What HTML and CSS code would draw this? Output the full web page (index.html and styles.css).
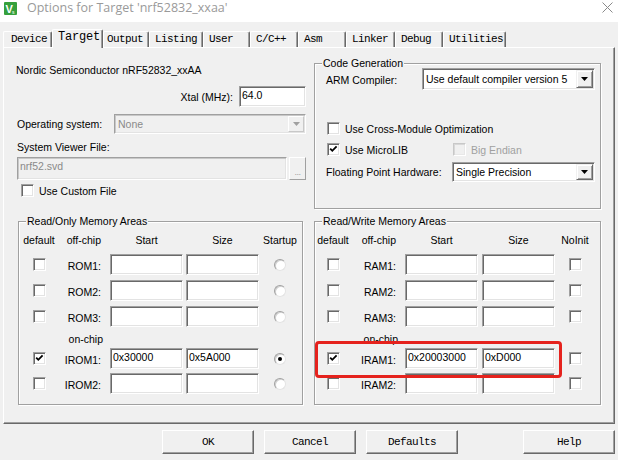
FILE: index.html
```html
<!DOCTYPE html>
<html>
<head>
<meta charset="utf-8">
<title>Options for Target</title>
<link rel="stylesheet" href="styles.css">
</head>
<body>
<div class="titlebar">
  <svg class="app-icon" width="13" height="13" viewBox="0 0 13 13"><rect width="13" height="13" rx="1" fill="#36a03c"/><text x="1.5" y="10.5" font-family="Liberation Sans, sans-serif" font-weight="bold" font-size="11" fill="#fff">V</text><text x="8" y="12" font-family="Liberation Sans, sans-serif" font-size="5" fill="#fff">s</text></svg>
  <span class="title">Options for Target 'nrf52832_xxaa'</span>
  <svg class="close" width="11" height="11" viewBox="0 0 11 11"><path d="M0.5 0.5L10.5 10.5M10.5 0.5L0.5 10.5" stroke="#8a8a8a" stroke-width="1" fill="none"/></svg>
</div>

<div class="tabs">
  <div class="tab w-device">Device</div>
  <div class="tab tab-active w-target">Target</div>
  <div class="tab w-output">Output</div>
  <div class="tab w-listing">Listing</div>
  <div class="tab w-user">User</div>
  <div class="tab w-cpp">C/C++</div>
  <div class="tab w-asm">Asm</div>
  <div class="tab w-linker">Linker</div>
  <div class="tab w-debug">Debug</div>
  <div class="tab w-util">Utilities</div>
</div>

<div class="panel">
  <div class="top-row">
    <div class="left-col">
      <div class="device-name">Nordic Semiconductor nRF52832_xxAA</div>
      <div class="xtal-row">
        <span class="xtal-label">Xtal (MHz):</span>
        <div class="field xtal-field">64.0</div>
      </div>
      <div class="os-row">
        <span class="os-label">Operating system:</span>
        <div class="select select-disabled os-select">
          <span class="select-text">None</span>
          <span class="select-btn select-btn-disabled"><svg width="7" height="4" viewBox="0 0 7 4"><polygon points="0,0 7,0 3.5,4" fill="#a0a0a0"/></svg></span>
        </div>
      </div>
      <div class="svf-label">System Viewer File:</div>
      <div class="svd-row">
        <div class="field field-disabled svd-field">nrf52.svd</div>
        <div class="dots-btn">...</div>
      </div>
      <div class="check-row custom-file">
        <span class="cb"></span><span class="check-text">Use Custom File</span>
      </div>
    </div>

    <div class="group code-gen">
      <span class="legend">Code Generation</span>
      <div class="cg-row arm-row">
        <span class="cg-label arm-label">ARM Compiler:</span>
        <div class="select arm-select">
          <span class="select-text">Use default compiler version 5</span>
          <span class="select-btn"><svg width="7" height="4" viewBox="0 0 7 4"><polygon points="0,0 7,0 3.5,4" fill="#000"/></svg></span>
        </div>
      </div>
      <div class="check-row cmo-row">
        <span class="cb"></span><span class="check-text">Use Cross-Module Optimization</span>
      </div>
      <div class="check-row micro-row">
        <div class="check-item micro-item">
          <span class="cb"><svg width="9" height="9" viewBox="0 0 9 9"><path d="M1.2 3.6L3.3 5.8L7.6 1.4" stroke="#000" stroke-width="1.8" fill="none"/></svg></span><span class="check-text">Use MicroLIB</span>
        </div>
        <div class="check-item">
          <span class="cb cb-disabled"></span><span class="check-text text-disabled">Big Endian</span>
        </div>
      </div>
      <div class="cg-row fph-row">
        <span class="cg-label fph-label">Floating Point Hardware:</span>
        <div class="select fph-select">
          <span class="select-text">Single Precision</span>
          <span class="select-btn"><svg width="7" height="4" viewBox="0 0 7 4"><polygon points="0,0 7,0 3.5,4" fill="#000"/></svg></span>
        </div>
      </div>
    </div>
  </div>

  <div class="bottom-row">
    <div class="group rom">
      <span class="legend">Read/Only Memory Areas</span>
      <div class="mem-grid rom-grid">
        <div class="hdr c1">default</div><div class="hdr c2">off-chip</div><div class="hdr c3">Start</div><div class="hdr c4">Size</div><div class="hdr c5">Startup</div>

        <div class="cell c1"><span class="cb"></span></div><div class="cell c2">ROM1:</div><div class="cell c3"><div class="field mem-field"></div></div><div class="cell c4"><div class="field mem-field"></div></div><div class="cell c5"><span class="radio"></span></div>

        <div class="cell c1"><span class="cb"></span></div><div class="cell c2">ROM2:</div><div class="cell c3"><div class="field mem-field"></div></div><div class="cell c4"><div class="field mem-field"></div></div><div class="cell c5"><span class="radio"></span></div>

        <div class="cell c1"><span class="cb"></span></div><div class="cell c2">ROM3:</div><div class="cell c3"><div class="field mem-field"></div></div><div class="cell c4"><div class="field mem-field"></div></div><div class="cell c5"><span class="radio"></span></div>

        <div class="hdr c2 onchip">on-chip</div>

        <div class="cell c1"><span class="cb"><svg width="9" height="9" viewBox="0 0 9 9"><path d="M1.2 3.6L3.3 5.8L7.6 1.4" stroke="#000" stroke-width="1.8" fill="none"/></svg></span></div><div class="cell c2">IROM1:</div><div class="cell c3"><div class="field mem-field">0x30000</div></div><div class="cell c4"><div class="field mem-field">0x5A000</div></div><div class="cell c5"><span class="radio radio-on"></span></div>

        <div class="cell c1"><span class="cb"></span></div><div class="cell c2">IROM2:</div><div class="cell c3"><div class="field mem-field"></div></div><div class="cell c4"><div class="field mem-field"></div></div><div class="cell c5"><span class="radio"></span></div>
      </div>
    </div>

    <div class="group ram">
      <span class="legend">Read/Write Memory Areas</span>
      <div class="mem-grid ram-grid">
        <div class="hdr c1">default</div><div class="hdr c2">off-chip</div><div class="hdr c3">Start</div><div class="hdr c4">Size</div><div class="hdr c5">NoInit</div>

        <div class="cell c1"><span class="cb"></span></div><div class="cell c2">RAM1:</div><div class="cell c3"><div class="field mem-field"></div></div><div class="cell c4"><div class="field mem-field"></div></div><div class="cell c5"><span class="cb"></span></div>

        <div class="cell c1"><span class="cb"></span></div><div class="cell c2">RAM2:</div><div class="cell c3"><div class="field mem-field"></div></div><div class="cell c4"><div class="field mem-field"></div></div><div class="cell c5"><span class="cb"></span></div>

        <div class="cell c1"><span class="cb"></span></div><div class="cell c2">RAM3:</div><div class="cell c3"><div class="field mem-field"></div></div><div class="cell c4"><div class="field mem-field"></div></div><div class="cell c5"><span class="cb"></span></div>

        <div class="hdr c2 onchip">on-chip</div>

        <div class="cell c1"><span class="cb"><svg width="9" height="9" viewBox="0 0 9 9"><path d="M1.2 3.6L3.3 5.8L7.6 1.4" stroke="#000" stroke-width="1.8" fill="none"/></svg></span></div><div class="cell c2">IRAM1:</div><div class="cell c3"><div class="field mem-field">0x20003000</div></div><div class="cell c4"><div class="field mem-field">0xD000</div></div><div class="cell c5"><span class="cb"></span></div>

        <div class="cell c1"><span class="cb"></span></div><div class="cell c2">IRAM2:</div><div class="cell c3"><div class="field mem-field"></div></div><div class="cell c4"><div class="field mem-field"></div></div><div class="cell c5"><span class="cb"></span></div>
      </div>
      <div class="highlight"></div>
    </div>
  </div>
</div>

<div class="buttons">
  <div class="btn">OK</div>
  <div class="btn">Cancel</div>
  <div class="btn">Defaults</div>
  <div class="btn btn-help">Help</div>
</div>
</body>
</html>
```

FILE: styles.css
```css
* { box-sizing: border-box; }
html, body { margin: 0; padding: 0; }
body {
  width: 618px;
  height: 460px;
  overflow: hidden;
  background: #f0f0f0;
  font-family: "Liberation Sans", Arial, sans-serif;
  font-size: 10.5px;
  line-height: 14px;
  color: #000;
}

/* title bar */
.titlebar {
  height: 22px;
  background: #fff;
  display: flex;
  align-items: flex-start;
}
.app-icon { flex: none; margin: 2px 0 0 4px; }
.title {
  flex: 1;
  margin-left: 10px;
  font-family: "Open Sans", "Liberation Sans", sans-serif;
  font-size: 12.5px;
  line-height: 16px;
  color: #9a9a9a;
  white-space: nowrap;
}
.close { flex: none; margin: 2px 5px 0 0; }

/* tabs */
.tabs {
  height: 25px;
  padding: 7px 0 0 3px;
  display: flex;
  align-items: flex-end;
}
.tab {
  height: 16px;
  padding-left: 5px;
  background: #f0f0f0;
  border-top: 1px solid #fff;
  border-left: 1px solid #fff;
  border-right: 1px solid #696969;
  box-shadow: inset -1px 0 #a0a0a0;
  border-radius: 2px 2px 0 0;
  font-family: "Liberation Mono", monospace;
  font-size: 11px;
  letter-spacing: -0.6px;
  line-height: 15px;
  white-space: nowrap;
  flex: none;
}
.tab-active {
  height: 19px;
  margin-bottom: -1px;
  position: relative;
  z-index: 1;
  font-size: 12px;
  letter-spacing: -0.2px;
}
.w-device { width: 49px; padding-left: 7px; }
.w-target { width: 51px; }
.w-output { width: 46px; padding-left: 3px; }
.w-listing { width: 54px; }
.w-user { width: 47px; }
.w-cpp { width: 48px; }
.w-asm { width: 48px; }
.w-linker { width: 49px; }
.w-debug { width: 48px; }
.w-util { width: 63px; }

/* panel */
.panel {
  margin-left: 3px;
  width: 612px;
  height: 377px;
  border: 1px solid;
  border-color: #fff #696969 #696969 #fff;
  box-shadow: inset -1px -1px #a0a0a0;
  padding: 15px 0 0 12px;
}
.top-row { display: flex; height: 146px; }
.left-col { width: 290px; flex: none; }

.device-name { white-space: nowrap; }
.xtal-row {
  margin-top: 9px;
  height: 21px;
  display: flex;
  justify-content: flex-end;
  align-items: center;
}
.xtal-label { margin-right: 6px; }
.xtal-field { width: 67px; height: 21px; }

.os-row {
  margin-top: 7px;
  height: 20px;
  display: flex;
  align-items: center;
}
.os-label { width: 98px; padding-left: 1px; flex: none; }
.os-select { width: 192px; height: 20px; }

.svf-label { margin-top: 6px; padding-left: 1px; }
.svd-row { margin-top: 3px; height: 23px; display: flex; }
.svd-field { width: 270px; height: 23px; margin-left: 1px; padding-top: 3px; }
.dots-btn {
  width: 17px;
  height: 23px;
  margin-left: 2px;
  border: 1px solid;
  border-color: #fff #a0a0a0 #a0a0a0 #fff;
  display: flex;
  align-items: flex-end;
  justify-content: center;
  color: #a0a0a0;
  font-size: 9px;
  line-height: 14px;
  letter-spacing: -0.5px;
}

/* inputs */
.field {
  background: #fff;
  border: 1px solid;
  border-color: #a0a0a0 #fff #fff #a0a0a0;
  box-shadow: inset 1px 1px #696969, inset -1px -1px #e3e3e3;
  padding: 1px 0 0 2px;
  line-height: 14px;
  white-space: nowrap;
  overflow: hidden;
}
.field-disabled {
  background: #f0f0f0;
  box-shadow: inset 1px 1px #c8c8c8, inset -1px -1px #e3e3e3;
  color: #8a8a8a;
}
.mem-field { width: 73px; height: 21px; }

/* select */
.select {
  display: flex;
  align-items: stretch;
  background: #fff;
  border: 1px solid;
  border-color: #a0a0a0 #fff #fff #a0a0a0;
  box-shadow: inset 1px 1px #696969, inset -1px -1px #e3e3e3;
  padding: 1px;
}
.select-text {
  flex: 1;
  padding-left: 1px;
  display: flex;
  align-items: center;
  white-space: nowrap;
}
.select-btn {
  width: 17px;
  flex: none;
  background: #f0f0f0;
  border: 1px solid;
  border-color: #f0f0f0 #696969 #696969 #f0f0f0;
  box-shadow: inset 1px 1px #fff, inset -1px -1px #a0a0a0;
  display: flex;
  align-items: center;
  justify-content: center;
}
.select-disabled {
  background: #f0f0f0;
  box-shadow: inset 1px 1px #c8c8c8, inset -1px -1px #e3e3e3;
  color: #8a8a8a;
}
.select-text { padding-left: 2px; }
.select-btn-disabled {
  width: 16px;
  border-color: #fff #c8c8c8 #c8c8c8 #fff;
  box-shadow: none;
}

/* checkboxes & radios */
.cb {
  width: 13px;
  height: 13px;
  flex: none;
  background: #fff;
  border: 1px solid;
  border-color: #a0a0a0 #fff #fff #a0a0a0;
  box-shadow: inset 1px 1px #696969, inset -1px -1px #e3e3e3;
  display: flex;
  align-items: center;
  justify-content: center;
}
.cb-disabled {
  background: #f0f0f0;
  border-color: #c8c8c8 #fff #fff #c8c8c8;
  box-shadow: inset 1px 1px #d8d8d8, inset -1px -1px #e8e8e8;
}
.radio {
  width: 12px;
  height: 12px;
  border-radius: 50%;
  background: #fff;
  border: 1px solid;
  border-color: #a0a0a0 #e3e3e3 #e3e3e3 #a0a0a0;
  box-shadow: inset 1px 1px #d0d0d0;
  display: flex;
  align-items: center;
  justify-content: center;
}
.radio-on::after {
  content: "";
  width: 4px;
  height: 4px;
  border-radius: 50%;
  background: #000;
}
.check-row { display: flex; align-items: center; height: 13px; }
.check-item { display: flex; align-items: center; }
.check-text { margin-left: 5px; white-space: nowrap; }
.text-disabled { color: #a0a0a0; }
.custom-file { margin-top: 4px; margin-left: 5px; }

/* groups */
.group {
  position: relative;
  flex: none;
  border: 1px solid #a0a0a0;
  box-shadow: inset 1px 1px #fff, 1px 1px #fff;
}
.legend {
  position: absolute;
  top: -8px;
  left: 7px;
  padding: 0 1px;
  background: #f0f0f0;
  line-height: 14px;
  white-space: nowrap;
}

.code-gen {
  width: 287px;
  height: 146px;
  margin-left: 8px;
  padding: 4px 0 0 11px;
}
.cg-row { display: flex; align-items: center; }
.cg-label { flex: none; white-space: nowrap; }
.arm-row { height: 22px; }
.arm-label { width: 96px; margin-top: 2px; }
.arm-select { width: 173px; height: 22px; }
.cmo-row { margin-top: 32px; margin-left: 1px; }
.micro-row { margin-top: 8px; margin-left: 1px; }
.micro-item { width: 126px; }
.fph-row { margin-top: 6px; height: 20px; }
.fph-label { width: 126px; }
.fph-select { width: 143px; height: 20px; }

/* memory groups */
.bottom-row { display: flex; margin-top: 12px; }
.rom { width: 285px; height: 184px; margin-left: 2px; padding-top: 11px; }
.ram { width: 287px; height: 184px; margin-left: 11px; padding-top: 11px; }

.mem-grid {
  display: grid;
  grid-template-rows: 21px 26px 26px 26px 16px 25px 21px;
  align-items: start;
}
.rom-grid { grid-template-columns: 40px 51px 76px 73px 42px; }
.ram-grid { grid-template-columns: 36px 54px 77px 73px 40px; }

.c1 { grid-column: 1; }
.c2 { grid-column: 2; }
.c3 { grid-column: 3; }
.c4 { grid-column: 4; }
.c5 { grid-column: 5; }

.hdr { line-height: 14px; text-align: center; white-space: nowrap; }
.hdr.c2 { text-align: right; padding-right: 9px; }
.hdr.c3 { width: 73px; }
.hdr.onchip { padding-right: 7px; }

.cell { height: 21px; display: flex; align-items: center; }
.cell.c1, .cell.c5 { justify-content: center; }
.cell.c2 { justify-content: flex-end; padding-right: 9px; padding-top: 2px; }

.highlight {
  position: absolute;
  left: 0;
  top: 119px;
  width: 247px;
  height: 37px;
  border: 3px solid #e5221d;
  border-radius: 4px;
}

/* buttons */
.buttons {
  margin: 6px 0 0 3px;
  width: 612px;
  display: flex;
  justify-content: flex-end;
}
.btn {
  width: 92px;
  height: 24px;
  margin-left: 10px;
  border: 1px solid;
  border-color: #fff #696969 #696969 #fff;
  box-shadow: inset -1px -1px #a0a0a0;
  display: flex;
  align-items: center;
  justify-content: center;
  font-family: "Liberation Mono", monospace;
  font-size: 11px;
  letter-spacing: -0.6px;
  line-height: 15px;
}
.btn-help { margin-left: 65px; }
```
